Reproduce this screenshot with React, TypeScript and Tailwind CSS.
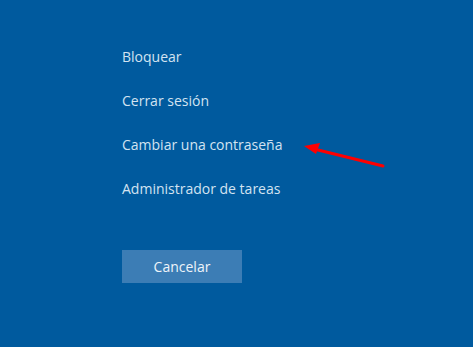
export default function App() {
  const items = ['Bloquear', 'Cerrar sesión', 'Cambiar una contraseña', 'Administrador de tareas']

  return (
    <div className="relative w-[473px] h-[347px] bg-[#005a9e] overflow-hidden font-['Open_Sans','Noto_Sans',sans-serif]">
      <div className="flex flex-col pl-[122px] pt-[46px]">
        {items.map((label) => (
          <div key={label} className="h-[44px] text-[14px] leading-[22px] text-[#d3e3f1]">
            {label}
          </div>
        ))}
        <button
          type="button"
          className="mt-[28px] w-[120px] h-[33px] bg-[#3c7db5] text-[14px] text-[#eef4fa]"
        >
          Cancelar
        </button>
      </div>

      {/* red annotation arrow */}
      <svg className="absolute left-0 top-0" width="473" height="347" viewBox="0 0 473 347">
        <line x1="383" y1="166" x2="314" y2="149" stroke="#ff0000" strokeWidth="3" strokeLinecap="round" />
        <polygon points="304,146 320,143 316,154" fill="#ff0000" />
      </svg>
    </div>
  )
}
